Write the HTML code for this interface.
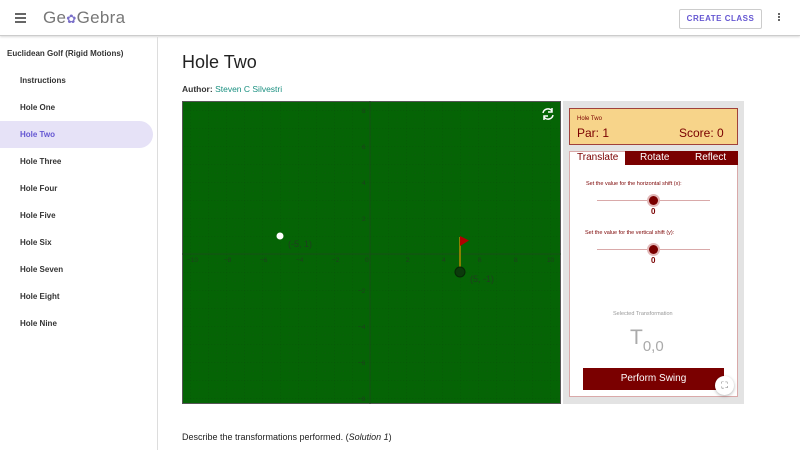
<!DOCTYPE html>
<html><head><meta charset="utf-8"><style>
*{margin:0;padding:0;box-sizing:border-box}
body{width:800px;height:450px;overflow:hidden;background:#fff;font-family:"Liberation Sans",sans-serif;position:relative}
.top{position:absolute;left:0;top:0;width:800px;height:36px;border-bottom:1px solid #ccc;box-shadow:0 1px 2px rgba(0,0,0,.15);background:#fff}
.side{position:absolute;left:0;top:37px;width:158px;height:413px;border-right:1px solid #ddd}
.side div{position:absolute;font-size:8px;font-weight:bold;color:#333}
.abs{position:absolute}
</style></head><body>
<div class="top">
 <div class="abs" style="left:15px;top:13px;width:11px;height:2px;background:#666;box-shadow:0 4px 0 #666,0 8px 0 #666"></div>
 <div class="abs" style="left:43px;top:8px;font-size:17px;color:#777;letter-spacing:0.3px">Ge<span style="color:#7a6fc9;font-size:12px">✿</span>Gebra</div>
 <div class="abs" style="left:679px;top:9px;width:83px;height:20px;border:1px solid #ccc;border-radius:2px;color:#6557d2;font-size:8px;font-weight:bold;text-align:center;line-height:18px;letter-spacing:.5px">CREATE CLASS</div>
 <div class="abs" style="left:778px;top:13px;width:2px;height:2px;background:#666;box-shadow:0 3px 0 #666,0 6px 0 #666"></div>
</div>
<div class="side">
 <div style="left:7px;top:12px">Euclidean Golf (Rigid Motions)</div>
 <div style="left:20px;top:39px">Instructions</div>
 <div style="left:20px;top:66px">Hole One</div>
 <div style="left:0;top:84px;width:153px;height:27px;background:#e6e2f7;border-radius:0 14px 14px 0;color:#6557d2;padding:9px 0 0 20px">Hole Two</div>
 <div style="left:20px;top:120px">Hole Three</div>
 <div style="left:20px;top:147px">Hole Four</div>
 <div style="left:20px;top:174px">Hole Five</div>
 <div style="left:20px;top:201px">Hole Six</div>
 <div style="left:20px;top:228px">Hole Seven</div>
 <div style="left:20px;top:255px">Hole Eight</div>
 <div style="left:20px;top:282px">Hole Nine</div>
</div>
<div class="abs" style="left:182px;top:52px;font-size:18px;color:#222">Hole Two</div>
<div class="abs" style="left:182px;top:84px;font-size:8.5px;color:#333"><b>Author:</b> <span style="color:#1a9080">Steven C Silvestri</span></div>
<svg class="abs" style="left:182px;top:101px" width="379" height="303" viewBox="0 0 379 303">
<defs><pattern id="g" x="8" y="9" width="18" height="18" patternUnits="userSpaceOnUse">
<path d="M0 0V18M0 0H18" stroke="#0a4d0a" stroke-width="0.6" stroke-dasharray="1.5 1.5" fill="none"/>
<path d="M9 0V18M0 9H18" stroke="#0e5a0e" stroke-width="0.4" stroke-dasharray="1 2" fill="none"/></pattern></defs>
<rect width="379" height="303" fill="#056405"/>
<rect width="379" height="303" fill="url(#g)"/>
<rect x="0.5" y="0.5" width="378" height="302" fill="none" stroke="#555" stroke-width="1"/>
<line x1="0" y1="153" x2="379" y2="153" stroke="#1d4a1d" stroke-width="0.8"/>
<line x1="188" y1="0" x2="188" y2="303" stroke="#1d4a1d" stroke-width="0.8"/>
<g font-size="6.5" fill="#1f3f1f" font-family="Liberation Sans">
<text x="5" y="161">−10</text><text x="42" y="161">−8</text><text x="78" y="161">−6</text><text x="114" y="161">−4</text><text x="150" y="161">−2</text><text x="183" y="161">0</text>
<text x="224" y="161">2</text><text x="260" y="161">4</text><text x="296" y="161">6</text><text x="332" y="161">8</text><text x="365" y="161">10</text>
<text x="180" y="12">8</text><text x="180" y="48">6</text><text x="180" y="84">4</text><text x="180" y="120">2</text>
<text x="176" y="192">−2</text><text x="176" y="228">−4</text><text x="176" y="264">−6</text><text x="176" y="300">−8</text>
</g>
<circle cx="98" cy="135" r="3.5" fill="#fff"/>
<text x="106" y="146" font-size="9" fill="#1f3f1f">(-5, 1)</text>
<line x1="278" y1="171" x2="278" y2="136" stroke="#b58a00" stroke-width="1.5"/>
<path d="M278 135L287 139.5L278 145Z" fill="#b00000"/>
<circle cx="278" cy="171" r="5" fill="#0b3a0b" stroke="#062706"/>
<text x="288" y="181" font-size="9" fill="#1f3f1f">(5, -1)</text>
<g transform="translate(366,13)" fill="none" stroke="#fff" stroke-width="1.5"><path d="M-5 -1A5 5 0 0 1 4 -3M5 1A5 5 0 0 1 -4 3"/><path d="M4 -6V-2H0M-4 6V2H0"/></g>
</svg>
<div class="abs" style="left:563px;top:101px;width:181px;height:303px;background:#e3e3e3"></div>
<div class="abs" style="left:569px;top:108px;width:169px;height:37px;background:#f7d48a;border:1px solid #a0413a"></div>
<div class="abs" style="left:577px;top:116px;font-size:6px;color:#7a0000">Hole Two</div>
<div class="abs" style="left:577px;top:126px;font-size:12px;color:#7a0000">Par: 1</div>
<div class="abs" style="left:679px;top:126px;font-size:12px;color:#7a0000">Score: 0</div>
<div class="abs" style="left:569px;top:151px;width:169px;height:246px;background:#fff;border:1px solid #d9a9a9"></div>
<div class="abs" style="left:625px;top:151px;width:113px;height:14px;background:#7a0000"></div>
<div class="abs" style="left:577px;top:152px;font-size:10px;color:#7a0000">Translate</div>
<div class="abs" style="left:640px;top:152px;font-size:10px;color:#fff">Rotate</div>
<div class="abs" style="left:695px;top:152px;font-size:10px;color:#fff">Reflect</div>
<div class="abs" style="left:586px;top:181px;font-size:5.5px;color:#7a0000">Set the value for the horizontal shift (x):</div>
<div class="abs" style="left:597px;top:200px;width:113px;height:1px;background:#d9a9a9"></div>
<div class="abs" style="left:649px;top:196px;width:9px;height:9px;border-radius:50%;background:#7a0000;box-shadow:0 0 0 2px #e2b8b8"></div>
<div class="abs" style="left:651px;top:207px;font-size:8px;color:#7a0000;font-weight:bold">0</div>
<div class="abs" style="left:585px;top:230px;font-size:5.5px;color:#7a0000">Set the value for the vertical shift (y):</div>
<div class="abs" style="left:597px;top:249px;width:113px;height:1px;background:#d9a9a9"></div>
<div class="abs" style="left:649px;top:245px;width:9px;height:9px;border-radius:50%;background:#7a0000;box-shadow:0 0 0 2px #e2b8b8"></div>
<div class="abs" style="left:651px;top:256px;font-size:8px;color:#7a0000;font-weight:bold">0</div>
<div class="abs" style="left:613px;top:311px;font-size:5.5px;color:#999">Selected Transformation</div>
<div class="abs" style="left:630px;top:326px;font-size:21px;color:#aaa">T<span style="font-size:15px;position:relative;top:7px">0,0</span></div>
<div class="abs" style="left:583px;top:368px;width:141px;height:22px;background:#7a0000;color:#fff;font-size:10px;text-align:center;line-height:22px">Perform Swing</div>
<div class="abs" style="left:715px;top:376px;width:19px;height:19px;border-radius:50%;background:#fff;box-shadow:0 1px 3px rgba(0,0,0,.3);color:#555;font-size:9px;text-align:center;line-height:19px">⛶</div>
<div class="abs" style="left:182px;top:432px;font-size:9px;color:#222">Describe the transformations performed. (<i>Solution 1</i>)</div>
</body></html>
